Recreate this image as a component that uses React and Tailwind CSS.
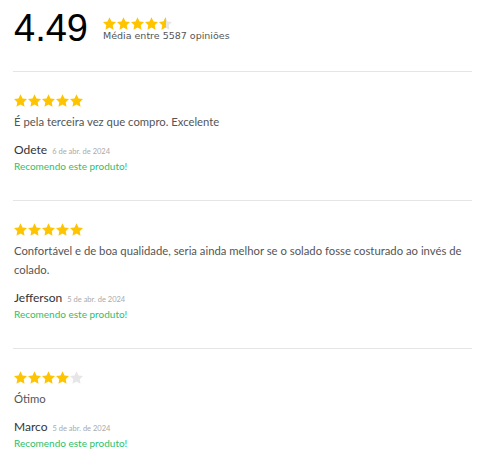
import React from "react";

const STAR = "M12 .587l3.668 7.568 8.332 1.151-6.064 5.828 1.48 8.279L12 19.446l-7.416 3.967 1.48-8.279L0 9.306l8.332-1.151z";

function Star({ size, fill = "#ffc400", half = false, id }) {
  return (
    <svg width={size} height={size} viewBox="0 0 24 24" className="shrink-0">
      {half && (
        <defs>
          <clipPath id={id}>
            <rect x="0" y="0" width="13" height="24" />
          </clipPath>
        </defs>
      )}
      {half ? (
        <>
          <path d={STAR} fill="#e6e6e6" />
          <path d={STAR} fill={fill} clipPath={`url(#${id})`} />
        </>
      ) : (
        <path d={STAR} fill={fill} />
      )}
    </svg>
  );
}

function Stars({ n }) {
  return (
    <div className="flex gap-[1px]">
      {[0, 1, 2, 3, 4].map((i) => (
        <Star key={i} size={13} fill={i < n ? "#ffc400" : "#e6e6e6"} />
      ))}
    </div>
  );
}

const reviews = [
  { stars: 5, text: "É pela terceira vez que compro. Excelente", name: "Odete", date: "6 de abr. de 2024" },
  {
    stars: 5,
    text: "Confortável e de boa qualidade, seria ainda melhor se o solado fosse costurado ao invés de colado.",
    name: "Jefferson",
    date: "5 de abr. de 2024",
  },
  { stars: 4, text: "Ótimo", name: "Marco", date: "5 de abr. de 2024" },
];

export default function App() {
  return (
    <div className="w-[500px] h-[455px] bg-white overflow-hidden pl-[13px] pr-[28px]" style={{ fontFamily: "Lato, 'Open Sans', sans-serif" }}>
      <div className="flex items-center pt-[6px] h-[71px] pb-[22px]">
        <div className="text-[38px] leading-none text-black pl-[1px]" style={{ fontFamily: "'Liberation Sans', Arial, sans-serif" }}>
          4.49
        </div>
        <div className="ml-[15px] flex flex-col mt-[4px]">
          <div className="flex gap-[1px]">
            {[0, 1, 2, 3].map((i) => (
              <Star key={i} size={13} />
            ))}
            <Star size={13} half id="halfclip" />
          </div>
          <div className="text-[9.5px] leading-[12px] text-[#555]" style={{ fontFamily: "'DejaVu Sans', Verdana, sans-serif" }}>
            Média entre 5587 opiniões
          </div>
        </div>
      </div>
      {reviews.map((r, idx) => (
        <div key={idx} className="border-t border-[#e5e5e5] pt-[22px] pb-[27px] pl-[1px]">
          <Stars n={r.stars} />
          <div className="mt-[5px] text-[11.3px] leading-[19px] text-[#555]">{r.text}</div>
          <div className="mt-[12px] flex items-baseline gap-[5px] leading-[14px]">
            <span className="text-[12px] text-[#333]">{r.name}</span>
            <span className="text-[7.5px] text-[#aaa]">{r.date}</span>
          </div>
          <div className="text-[10px] leading-[14px] text-[#2bbf6a]">Recomendo este produto!</div>
        </div>
      ))}
    </div>
  );
}
